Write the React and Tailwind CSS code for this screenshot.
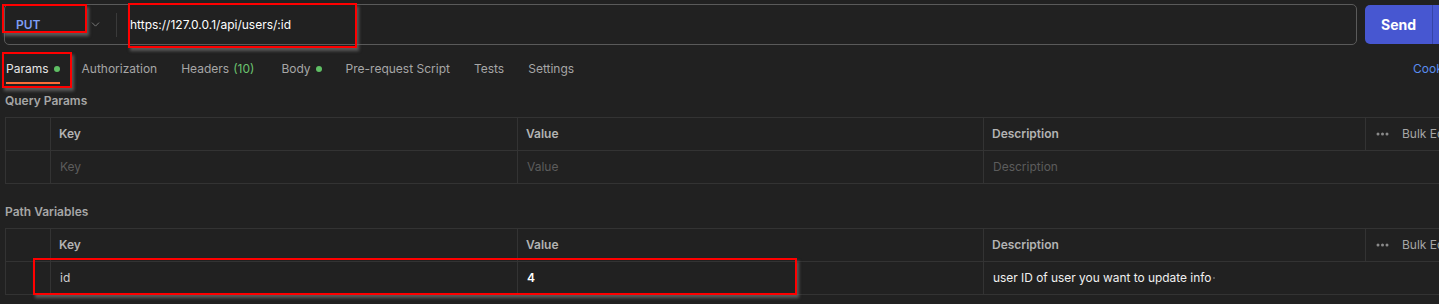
import React from 'react';
import { ChevronDown } from 'lucide-react';

const tabs = [
  { label: 'Params', dot: true, active: true, extra: 'mr-[-2px]' },
  { label: 'Authorization' },
  { label: 'Headers', count: '(10)', extra: 'mr-[3px]' },
  { label: 'Body', dot: true },
  { label: 'Pre-request Script' },
  { label: 'Tests' },
  { label: 'Settings' },
];

const Dots = () => (
  <svg width="13" height="4" viewBox="0 0 13 4" className="flex-none">
    <circle cx="2" cy="2" r="1.5" fill="#8a8a8a" />
    <circle cx="6.5" cy="2" r="1.5" fill="#8a8a8a" />
    <circle cx="11" cy="2" r="1.5" fill="#8a8a8a" />
  </svg>
);

const ParamTable = ({ row }) => (
  <div className="w-[1500px] border-t border-l border-[#333333]">
    <div className="flex h-[33px] border-b border-[#333333] text-[12px] font-semibold text-[#b3b3b3]">
      <div className="w-[45px] flex-none border-r border-[#333333]" />
      <div className="w-[467px] flex-none border-r border-[#333333] flex items-center pl-[8px]">Key</div>
      <div className="w-[466px] flex-none border-r border-[#333333] flex items-center pl-[8px]">Value</div>
      <div className="w-[382px] flex-none border-r border-[#333333] flex items-center pl-[8px]">Description</div>
      <div className="flex items-center pl-[10px] gap-[13px] font-normal text-[#a6a6a6]">
        <Dots />
        <span>Bulk Edit</span>
      </div>
    </div>
    <div className="flex h-[33px] border-b border-[#333333] text-[12px]">
      <div className="w-[45px] flex-none border-r border-[#333333]" />
      {row ? (
        <>
          <div className="w-[467px] flex-none border-r border-[#333333] flex items-center pl-[9px] text-[#cfcfcf]">{row.key}</div>
          <div className="w-[466px] flex-none border-r border-[#333333] flex items-center pl-[9px] text-white font-semibold">{row.value}</div>
          <div className="flex-1 flex items-center pl-[9px] text-[11.9px] text-[#f0f0f0]">
            {row.description}
            <span className="ml-[2px] w-[2px] h-[2px] rounded-full bg-[#666666]" />
          </div>
        </>
      ) : (
        <>
          <div className="w-[467px] flex-none border-r border-[#333333] flex items-center pl-[9px] text-[#5c5c5c]">Key</div>
          <div className="w-[466px] flex-none border-r border-[#333333] flex items-center pl-[9px] text-[#5c5c5c]">Value</div>
          <div className="flex-1 flex items-center pl-[9px] text-[#5c5c5c]">Description</div>
        </>
      )}
    </div>
  </div>
);

const Mark = ({ className }) => (
  <div className={`absolute border-2 border-[#ff0000] shadow-[2px_3px_3px_rgba(110,110,110,0.75)] ${className}`} />
);

export default function App() {
  return (
    <div className="relative w-[1439px] h-[304px] overflow-hidden bg-[#212121] font-['Inter',sans-serif]">
      {/* request bar */}
      <div className="flex pt-[4px] pl-[4px] w-[1540px]">
        <div className="w-[1353px] h-[41px] flex-none border border-[#5a5a5a] rounded-[5px] flex items-center">
          <div className="flex items-center pl-[11px] w-[111px] flex-none">
            <span className="text-[12px] font-semibold text-[#7f9ef5] w-[73px]">PUT</span>
            <ChevronDown size={13} strokeWidth={1.5} className="text-[#8a8a8a]" />
          </div>
          <div className="w-px h-[24px] bg-[#3a3a3a] flex-none" />
          <span className="ml-[13px] text-[12px] text-white">https://127.0.0.1/api/users/:id</span>
        </div>
        <div className="ml-[8px] mt-[1px] h-[39px] w-[110px] flex-none rounded-l-[5px] bg-[#4757d1] flex">
          <div className="w-[67px] flex items-center justify-center text-[14px] font-bold text-white">Send</div>
          <div className="w-px bg-[#3645a8]" />
        </div>
      </div>

      {/* tabs */}
      <div className="flex items-center mt-[4px] h-[40px] pl-[6px] w-[1540px]">
        <div className="w-[1407px] flex-none flex items-center gap-[24px] text-[12px] text-[#a6a6a6]">
          {tabs.map((t) => (
            <div key={t.label} className={`relative flex items-center h-[40px] ${t.extra || ''}`}>
              <span className={t.active ? 'text-[#e6e6e6]' : ''}>{t.label}</span>
              {t.count && <span className="ml-[4px] text-[#6cc36f]">{t.count}</span>}
              {t.dot && <span className="ml-[5px] w-[6px] h-[6px] rounded-full bg-[#5fbf64]" />}
              {t.active && <div className="absolute left-0 right-0 bottom-[5px] h-[2px] bg-[#ff6c37]" />}
            </div>
          ))}
        </div>
        <span className="text-[12px] text-[#5a8dee]">Cookies</span>
      </div>

      {/* query params */}
      <div className="pl-[5px]">
        <div className="h-[28px] pb-[4px] flex items-center text-[12px] font-semibold text-[#a6a6a6]">Query Params</div>
        <ParamTable />
        <div className="h-[28px] pb-[4px] mt-[16px] flex items-center text-[12px] font-semibold text-[#a6a6a6]">Path Variables</div>
        <ParamTable row={{ key: 'id', value: '4', description: 'user ID of user you want to update info' }} />
      </div>

      {/* annotation boxes */}
      <Mark className="left-[2px] top-[4px] w-[85px] h-[29px]" />
      <Mark className="left-[128px] top-[3px] w-[229px] h-[45px]" />
      <Mark className="left-[2px] top-[52px] w-[70px] h-[36px]" />
      <Mark className="left-[33px] top-[258px] w-[764px] h-[37px]" />
    </div>
  );
}
